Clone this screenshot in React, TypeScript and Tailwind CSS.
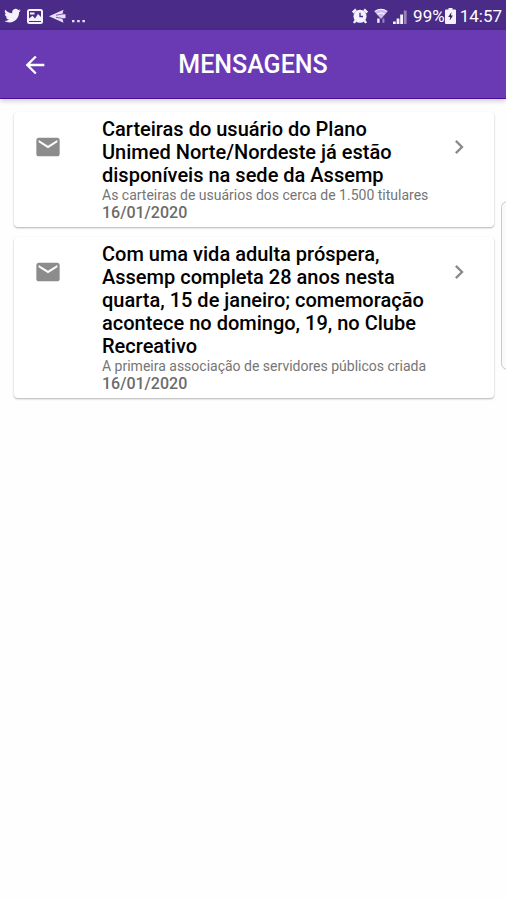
import React from "react"
import { MdArrowBack, MdChevronRight, MdMail } from "react-icons/md"

type Message = {
  title: string
  summary: string
  date: string
}

const messages: Message[] = [
  {
    title: "Carteiras do usuário do Plano Unimed Norte/Nordeste já estão disponíveis na sede da Assemp",
    summary: "As carteiras de usuários dos cerca de 1.500 titulares",
    date: "16/01/2020",
  },
  {
    title:
      "Com uma vida adulta próspera, Assemp completa 28 anos nesta quarta, 15 de janeiro; comemoração acontece no domingo, 19, no Clube Recreativo",
    summary: "A primeira associação de servidores públicos criada",
    date: "16/01/2020",
  },
]

function StatusBar() {
  return (
    <div className="flex h-[30px] items-center justify-between bg-[#4a2b87] px-1 pt-[2px] text-white">
      <div className="flex items-center gap-[6px]">
        {/* Twitter */}
        <svg className="h-4 w-[17px]" viewBox="0 0 24 22" fill="#f6f1ff">
          <path d="M23.6 3.3c-.9.4-1.800.6-2.700.8 1-.6 1.700-1.500 2.100-2.600-.9.5-1.900.9-3 1.100A4.800 4.800 0 0 0 11.700 7C7.800 6.800 4.300 4.900 1.900 2a4.800 4.800 0 0 0 1.500 6.400c-.8 0-1.500-.2-2.200-.6 0 2.300 1.600 4.300 3.900 4.800-.7.2-1.400.2-2.200.1.6 1.900 2.400 3.300 4.500 3.300A9.600 9.600 0 0 1 .4 18 13.500 13.500 0 0 0 7.700 20.100c8.800 0 13.900-7.400 13.500-14.300.9-.7 1.700-1.500 2.400-2.500z" />
        </svg>
        {/* Picture */}
        <svg className="h-[15px] w-4" viewBox="0 0 16 15" fill="none">
          <rect x="1" y="1" width="14" height="13" rx="1.500" stroke="#f6f1ff" strokeWidth="2" />
          <path d="M2 12V9.500l3.500-2.700L8 9.500l3-4.500 3 3v4z" fill="#f6f1ff" />
          <path d="M3 3.500h4.500v2H3z" fill="#f6f1ff" />
        </svg>
        {/* Paper plane */}
        <svg className="h-[15px] w-[17px]" viewBox="0 0 17 15" fill="#e9defa">
          <path d="M0 7.200 14.500.8 13.500 4.500 16.500 5.500v3.500l-3 .9 1 3.800z" />
          <path d="M7 6.200 15.500 4.800M7 8.300l8.500 1.500" stroke="#4a2b87" strokeWidth=".7" />
        </svg>
        <svg className="h-[15px] w-[14px]" viewBox="0 0 14 15" fill="#e9defa">
          <path d="M0 11h2.500v2.300H0zM5.200 11h2.500v2.300H5.200zM10.400 11h2.500v2.300h-2.500z" />
        </svg>
      </div>

      <div className="flex items-center">
        {/* Alarm */}
        <svg className="h-4 w-4" viewBox="0 0 16 16" fill="none">
          <path d="M.8 4.500 4 1.500M15.200 4.500 12 1.500M3.500 12.500 2 15M12.500 12.500 14 15" stroke="#f6f1ff" strokeWidth="2.400" />
          <circle cx="8" cy="8.300" r="6.500" fill="#f6f1ff" />
          <path d="M8 4.800v3.700h3" stroke="#4a2b87" strokeWidth="1.300" />
        </svg>
        {/* Wi-Fi */}
        <svg className="ml-[6px] h-4 w-[14px]" viewBox="0 0 14 16" fill="none">
          <path d="M.5 3.500q6.500-5 13 0L7.500 10.500h-1z" fill="#cbb9e8" />
          <path d="M.8 3.500q6.200-4.500 12.400 0M3.500 6.300q3.500-2.500 7 0" stroke="#f6f1ff" strokeWidth="1.200" />
          <path d="M3.200 10.500h2.400v4.300H3.200z" fill="#f6f1ff" />
          <path d="M8.400 10.500h2v4.300h-2z" fill="#9a82c6" />
        </svg>
        {/* Signal */}
        <svg className="ml-[5px] h-[15px] w-[14px]" viewBox="0 0 14 15" fill="#f6f1ff">
          <path d="M0 12.500h2.800V15H0zM3.600 9.500h2.800V15H3.600zM7.200 5.500H10V15H7.200z" />
          <path d="M10.800 1.500h2.800V15h-2.800z" opacity=".45" />
        </svg>
        <span className="ml-[6px] text-[17px] leading-7">99%</span>
        {/* Battery */}
        <svg className="h-4 w-[11px]" viewBox="0 0 11 16">
          <path d="M3.500 0h4v1.500H10a1 1 0 0 1 1 1V15a1 1 0 0 1-1 1H1a1 1 0 0 1-1-1V2.500a1 1 0 0 1 1-1h2.500z" fill="#f6f1ff" />
          <path d="M6.500 4 3.200 9h2l-.5 3.500 3.300-5H6z" fill="#35204f" />
        </svg>
        <span className="ml-1 text-[17px] leading-7">14:57</span>
      </div>
    </div>
  )
}

function Header() {
  return (
    <header className="relative flex h-[69px] items-center justify-center border-b border-[#4d0a9c] bg-[#6a3ab5] pt-[2px] shadow-[0_2px_5px_rgba(0,0,0,0.2)]">
      <button type="button" aria-label="Voltar" className="absolute left-[21px] text-white">
        <MdArrowBack size={28} />
      </button>
      <h1 className="text-[25px] font-medium text-white">MENSAGENS</h1>
    </header>
  )
}

function MessageCard({ message }: { message: Message }) {
  return (
    <li>
      <a
        href="#"
        className="flex items-start rounded bg-white pt-[6px] pr-[21px] pb-1 pl-5 shadow-[0_1px_2px_rgba(0,0,0,0.3)]"
      >
        <MdMail size={28} className="mt-[15px] shrink-0 text-[#8c8c8c]" />
        <div className="ml-10 min-w-0 flex-1 pr-4">
          <h2 className="text-xl leading-[23px] font-medium text-black">{message.title}</h2>
          <p className="text-sm leading-4 whitespace-nowrap text-[#757575]">{message.summary}</p>
          <p className="text-base leading-5 font-medium text-[#6b6b6b]">{message.date}</p>
        </div>
        <MdChevronRight size={28} className="mt-[15px] shrink-0 text-[#8c8c8c]" />
      </a>
    </li>
  )
}

export default function App() {
  return (
    <div className="relative min-h-screen overflow-hidden bg-[#fefefe] font-[Roboto,sans-serif]">
      <StatusBar />
      <Header />
      <main className="pt-[13px] pr-3 pl-[14px]">
        <ul className="flex flex-col gap-[10px]">
          {messages.map((message) => (
            <MessageCard key={message.title} message={message} />
          ))}
        </ul>
      </main>

      {/* Edge panel handle */}
      <div className="absolute top-[201px] -right-2 h-[169px] w-[13px] rounded-lg border border-[#c8c8c8] bg-[#fafafa]" />
    </div>
  )
}
